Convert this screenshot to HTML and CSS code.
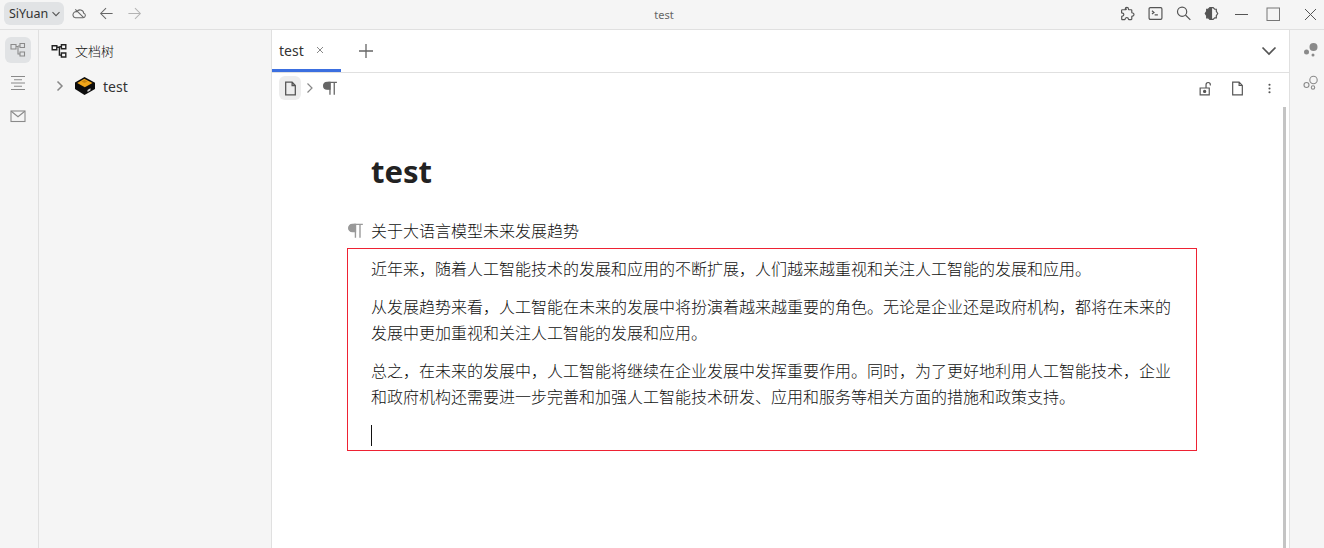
FILE: index.html
```html
<!DOCTYPE html>
<html lang="zh">
<head>
<meta charset="utf-8">
<title>test</title>
<link rel="stylesheet" href="styles.css">
</head>
<body>
<header class="titlebar">
  <div class="tb-left">
    <div class="brand">SiYuan<svg class="brand-caret" viewBox="0 0 10 10"><path d="M1.500 3.200 5 6.700 8.500 3.200"/></svg></div>
    <svg class="tb-ic cloud" viewBox="0 0 16 16"><path d="M3.600 12.500h8.300a2.400 2.400 0 0 0 .6-4.700 4 4 0 0 0-7.400-1.700A3.200 3.200 0 0 0 3.600 12.500Z"/><path d="M3.500 3.500 12.500 12.500"/></svg>
    <svg class="tb-ic arrow" viewBox="0 0 16 16"><path d="M14.500 8H2M7.500 2.200 1.800 8l5.700 5.800"/></svg>
    <svg class="tb-ic arrow off" viewBox="0 0 16 16"><path d="M1.500 8H14M8.500 2.200 14.200 8l-5.700 5.800"/></svg>
  </div>
  <div class="tb-title">test</div>
  <div class="tb-right">
    <svg class="tr-ic" viewBox="0 0 14 14"><path d="M5.200 2.600c0-2 3-2 3 0 0 .4 0 .7.3.7h2.200c.4 0 .6.2.6.6v2c0 .4.3.4.7.4 1.800 0 1.800 2.900 0 2.900-.4 0-.7 0-.7.4v2.400c0 .3-.2.5-.6.5H8.600c-.4 0-.5-.3-.5-.7 0-1.600-2.900-1.600-2.900 0 0 .4-.1.7-.5.7H2.500c-.4 0-.6-.2-.6-.5v-2.300c0-.4.3-.5.7-.5 1.700 0 1.700-2.800 0-2.800-.4 0-.8 0-.8-.4v-2.100c0-.4.200-.6.600-.6h3.100c.4 0 .7-.3.7-.7Z" transform="translate(-.3 .2)"/></svg>
    <svg class="tr-ic" viewBox="0 0 14 14"><rect x="1" y="1.500" width="12" height="11" rx="1.200"/><path d="M3.700 4.500 5.600 6 3.700 7.500M6.200 8.300h3"/></svg>
    <svg class="tr-ic" viewBox="0 0 14 14"><circle cx="5.700" cy="5.300" r="4.300"/><path d="m8.800 8.400 4.600 4.600"/></svg>
    <svg class="tr-ic" viewBox="0 0 14 14"><path class="fill" d="M7 1.500H5.500L4 3H2.500v2L1.200 7l1.300 2v2H4l1.500 1.500H7Z"/><path d="M7 1.500h1.500L10 3h1.500v2l1.300 2-1.300 2v2H10l-1.500 1.500H7"/></svg>
    <div class="win-btns">
      <svg class="win-ic" viewBox="0 0 15 15"><path d="M1 7.500H14"/></svg>
      <svg class="win-ic" viewBox="0 0 15 15"><rect x="1" y="1" width="12.500" height="12.500"/></svg>
      <svg class="win-ic" viewBox="0 0 15 15"><path d="M2 2 13 13M13 2 2 13"/></svg>
    </div>
  </div>
</header>

<div class="workspace">
  <nav class="dock dock-left">
    <span class="dock-btn on"><svg viewBox="0 0 16 16"><path d="M1 2.500h5v4.500h-5zM10 1.500h4.500v4H10zM10 10h4.500v4H10zM6 4.500H8V12H10M8 4H10"/></svg></span>
    <span class="dock-btn"><svg viewBox="0 0 16 16"><path d="M1 1.500h14M4 4.800h8M1 8h14M4 11.200h8M1 14.500h14"/></svg></span>
    <span class="dock-btn"><svg viewBox="0 0 16 16"><rect x="1" y="3" width="14" height="10.500"/><path d="m1.200 3.300 6.800 5.400 6.800-5.400"/></svg></span>
  </nav>

  <aside class="sidebar">
    <div class="side-head">
      <svg class="tree-ic" viewBox="0 0 16 16"><path d="M1.200 2.800h4.600v4H1.200zM10.400 1.800h4.400v4h-4.400zM10.400 10h4.400v4h-4.400zM5.800 4.300h2.600v7.800h2M8.400 3.800h2"/></svg>
      <span>文档树</span>
    </div>
    <div class="tree-row">
      <svg class="chev" viewBox="0 0 10 12"><path d="M2.500 1.500 7 6l-4.500 4.500"/></svg>
      <svg class="nb-ic" viewBox="0 0 20 18">
        <path fill="#0c0c0c" d="M9.500 0 20 5.800V12l-10.500 6L0 12V5.500Z"/>
        <path fill="#f0a51a" d="M9.300 1.800 17.500 6 9.800 10.300 2.200 6Z"/>
        <path fill="#c88410" d="m6.500 4.500 3-1.600 3 1.600-3 1.600Z"/>
        <path fill="#d8d8d8" d="m12.500 13 3-1.700v2l-3 1.700Z"/>
      </svg>
      <span>test</span>
    </div>
  </aside>

  <main class="main">
    <div class="tabbar">
      <div class="tab"><span class="tab-name">test</span><svg class="tab-close" viewBox="0 0 8 8"><path d="M1 1 7 7M7 1 1 7"/></svg></div>
      <svg class="tab-add" viewBox="0 0 16 16"><path d="M8 1V15M1 8H15"/></svg>
      <svg class="tab-more" viewBox="0 0 16 10"><path d="M1.500 1.500 8 8l6.500-6.500"/></svg>
    </div>
    <div class="crumbs">
      <span class="crumb-doc"><svg viewBox="0 0 14 14"><path d="M2.500 1h6l3 3.200V13h-9ZM8.500 1v3.200h3"/></svg></span>
      <svg class="crumb-sep" viewBox="0 0 8 12"><path d="M1.500 1.500 6 6l-4.500 4.500"/></svg>
      <svg class="crumb-para" viewBox="0 0 14 14"><path class="fill" d="M6.500 1.200H3.800a3.200 3.200 0 0 0 0 6.400h2.700Z"/><path d="M6.500 1.200v11.600M10.500 1.200v11.600M5 1.200h8"/></svg>
      <div class="crumb-tools">
        <svg viewBox="0 0 14 14"><path d="M2 6.500h8.500V13H2Z"/><path d="M7.500 6.500V3.400a2 2 0 0 1 4 0v.8"/><circle class="fill" cx="6.200" cy="9.700" r="1"/></svg>
        <svg viewBox="0 0 14 14"><path d="M2.500 1h6l3 3.200V13h-9ZM8.500 1v3.200h3"/></svg>
        <svg viewBox="0 0 14 14"><circle class="fill" cx="7" cy="3.500" r="1"/><circle class="fill" cx="7" cy="7" r="1"/><circle class="fill" cx="7" cy="10.500" r="1"/></svg>
      </div>
    </div>
    <div class="editor">
      <div class="scroll-thumb"></div>
      <article class="doc">
        <h1 class="doc-title">test</h1>
        <p class="block first"><svg class="para-mark" viewBox="0 0 14 14"><path class="fill" d="M6.500 1.200H3.800a3.200 3.200 0 0 0 0 6.400h2.700Z"/><path d="M6.500 1.200v11.600M10.500 1.200v11.600M5 1.200h8"/></svg>关于大语言模型未来发展趋势</p>
        <div class="selection">
          <p class="block">近年来，随着人工智能技术的发展和应用的不断扩展，人们越来越重视和关注人工智能的发展和应用。</p>
          <p class="block">从发展趋势来看，人工智能在未来的发展中将扮演着越来越重要的角色。无论是企业还是政府机构，都将在未来的发展中更加重视和关注人工智能的发展和应用。</p>
          <p class="block">总之，在未来的发展中，人工智能将继续在企业发展中发挥重要作用。同时，为了更好地利用人工智能技术，企业和政府机构还需要进一步完善和加强人工智能技术研发、应用和服务等相关方面的措施和政策支持。</p>
          <p class="block caret-line"><span class="caret"></span></p>
        </div>
      </article>
    </div>
  </main>

  <nav class="dock dock-right">
    <span class="dock-btn"><svg viewBox="0 0 16 16"><circle class="solid" cx="10.500" cy="5" r="4"/><circle class="solid" cx="3.500" cy="10" r="2.500"/><circle class="solid" cx="10" cy="13" r="1.500"/></svg></span>
    <span class="dock-btn"><svg viewBox="0 0 16 16"><circle cx="10.500" cy="5" r="3.700"/><circle cx="3.500" cy="10" r="2.500"/><circle cx="10" cy="12.500" r="1.700"/></svg></span>
  </nav>
</div>
</body>
</html>
```

FILE: styles.css
```css
* { box-sizing: border-box; }
html, body { margin: 0; height: 100%; overflow: hidden; }
body {
  display: flex;
  flex-direction: column;
  background: #fff;
  color: #222;
  font-family: "Noto Sans", "Noto Sans CJK SC", sans-serif;
}
svg { display: block; fill: none; stroke-linejoin: miter; }
svg .fill { fill: currentColor; }

.titlebar {
  height: 30px;
  flex: none;
  display: grid;
  grid-template-columns: 1fr auto 1fr;
  align-items: center;
  background: #f5f5f5;
  border-bottom: 1px solid #e0e0e0;
  padding-left: 4px;
}
.tb-left { display: flex; align-items: center; }
.brand {
  display: flex;
  align-items: center;
  gap: 3px;
  height: 23px;
  width: 60px;
  padding-left: 5px;
  margin-bottom: 2px;
  border-radius: 6px;
  background: #e1e3e5;
  color: #333;
  font-size: 12.500px;
  white-space: nowrap;
}
.brand-caret { width: 10px; height: 10px; flex: none; stroke: #555; stroke-width: 1.100; }
.tb-ic { width: 15px; height: 15px; stroke: #666; stroke-width: 1.100; margin-bottom: 2px; }
.cloud { margin-left: 8px; }
.arrow { margin-left: 12px; }
.arrow.off { margin-left: 13px; stroke: #b3b3b3; }
.tb-title { font-size: 11px; color: #666; margin-bottom: 1px; }
.tb-right { display: flex; align-items: center; justify-content: flex-end; }
.tr-ic { width: 15px; height: 15px; stroke: #555; color: #555; stroke-width: 1.100; margin-right: 13px; margin-bottom: 2px; }
.win-btns { display: flex; align-items: center; margin-left: 2px; margin-right: 6px; }
.win-ic { width: 15px; height: 15px; stroke: #555; stroke-width: 1; margin-right: 17px; }
.win-btns .win-ic:nth-child(2) { stroke: #777; margin-right: 22px; }
.win-btns .win-ic:last-child { margin-right: 0; }

.workspace { flex: 1; display: flex; min-height: 0; }
.dock {
  flex: none;
  width: 39px;
  background: #f5f5f5;
  display: flex;
  flex-direction: column;
  align-items: center;
  gap: 7px;
  padding-top: 7px;
}
.dock-left { border-right: 1px solid #e0e0e0; padding-right: 3px; }
.dock-right { width: 35px; border-left: 1px solid #e0e0e0; padding-left: 7px; }
.dock-btn {
  width: 26px;
  height: 26px;
  display: flex;
  align-items: center;
  justify-content: center;
  border-radius: 6px;
}
.dock-btn.on { background: #e1e3e5; }
.dock-btn svg { width: 16px; height: 16px; stroke: #8a8a8a; stroke-width: 1.100; }
.dock-btn .solid { fill: #8a8a8a; stroke: none; }

.sidebar {
  flex: none;
  width: 233px;
  background: #f5f5f5;
  border-right: 1px solid #e0e0e0;
}
.side-head {
  height: 41px;
  display: flex;
  align-items: center;
  gap: 8px;
  padding-left: 12px;
  font-size: 13px;
  font-weight: 300;
  color: #111;
}
.tree-ic { width: 16px; height: 16px; stroke: #222; stroke-width: 1.400; }
.tree-row {
  height: 30px;
  display: flex;
  align-items: center;
  font-size: 14px;
  color: #333;
}
.chev { width: 10px; height: 12px; margin-left: 16px; stroke: #888; stroke-width: 1.500; }
.nb-ic { width: 20px; height: 18px; margin-left: 10px; }
.tree-row span { margin-left: 8px; }

.main { flex: 1; min-width: 0; display: flex; flex-direction: column; }
.tabbar {
  height: 43px;
  flex: none;
  display: flex;
  align-items: center;
  border-bottom: 1px solid #e0e0e0;
  padding-right: 12px;
}
.tab {
  width: 69px;
  height: 42px;
  display: flex;
  align-items: center;
  padding-left: 7px;
  padding-top: 1px;
  border-bottom: 3px solid #3b6fe0;
  font-size: 14px;
  color: #333;
}
.tab-close { width: 8px; height: 8px; margin-left: 12px; stroke: #888; stroke-width: 1; }
.tab-add { width: 16px; height: 16px; margin-left: 17px; stroke: #666; stroke-width: 1.300; }
.tab-more { width: 16px; height: 10px; margin-left: auto; stroke: #555; stroke-width: 1.700; }

.crumbs {
  height: 34px;
  flex: none;
  display: flex;
  align-items: center;
  padding: 0 12px 4px 7px;
  color: #666;
}
.crumb-doc {
  width: 22px;
  height: 24px;
  display: flex;
  align-items: center;
  justify-content: center;
  border-radius: 6px;
  background: #ededed;
}
.crumb-doc svg { width: 15px; height: 15px; stroke: #555; stroke-width: 1.200; }
.crumb-sep { width: 8px; height: 12px; margin-left: 5px; stroke: #888; stroke-width: 1.200; }
.crumb-para { width: 15px; height: 15px; margin-left: 9px; stroke: #666; color: #666; stroke-width: 1.200; }
.crumb-tools { margin-left: auto; display: flex; align-items: center; gap: 17px; }
.crumb-tools svg { width: 15px; height: 15px; stroke: #555; color: #555; stroke-width: 1.100; }
.crumb-tools svg:last-child { stroke: none; }

.editor { flex: 1; position: relative; min-height: 0; padding: 0 92px 0 75px; }
.scroll-thumb {
  position: absolute;
  top: 0;
  bottom: 0;
  right: 3px;
  width: 3px;
  background: #c4c4c4;
}
.doc { width: 850px; }
.doc-title {
  margin: 0 0 0 24px;
  padding-top: 42px;
  height: 111px;
  font-size: 31px;
  line-height: 44px;
  font-weight: 700;
  color: #222;
}
.block {
  margin: 0 0 12px;
  font-size: 16px;
  line-height: 26px;
  font-weight: 300;
  color: #111;
}
.block.first { position: relative; margin: 0 0 4px 24px; }
.para-mark {
  position: absolute;
  left: -23px;
  top: 5px;
  width: 16px;
  height: 16px;
  color: #999;
  stroke: #999;
  stroke-width: 1.200;
}
.selection {
  border: 1px solid #ee2233;
  height: 203px;
  padding: 7px 24px 0 23px;
}
.caret-line { height: 26px; display: flex; align-items: center; }
.caret { display: block; width: 1px; height: 21px; background: #111; }
```
